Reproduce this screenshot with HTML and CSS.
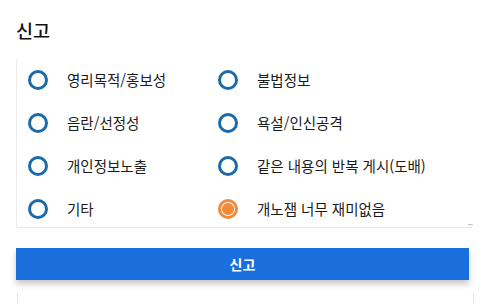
FILE: index.html
```html
<!DOCTYPE html>
<html lang="ko">
<head>
<meta charset="utf-8">
<link rel="stylesheet" href="styles.css">
</head>
<body>
<div class="dialog">
  <h1 class="title">신고</h1>
  <div class="options">
    <label class="opt"><span class="radio"></span><span class="label">영리목적/홍보성</span></label>
    <label class="opt"><span class="radio"></span><span class="label">불법정보</span></label>
    <label class="opt"><span class="radio"></span><span class="label">음란/선정성</span></label>
    <label class="opt"><span class="radio"></span><span class="label">욕설/인신공격</span></label>
    <label class="opt"><span class="radio"></span><span class="label">개인정보노출</span></label>
    <label class="opt"><span class="radio"></span><span class="label">같은 내용의 반복 게시(도배)</span></label>
    <label class="opt"><span class="radio"></span><span class="label">기타</span></label>
    <label class="opt"><span class="radio checked"></span><span class="label">개노잼 너무 재미없음</span></label>
    <span class="grip">···</span>
  </div>
  <button class="submit">신고</button>
  <div class="next"></div>
</div>
</body>
</html>
```
FILE: styles.css
```css
html, body {
  margin: 0;
  padding: 0;
  background: #ffffff;
}
body {
  width: 482px;
  height: 304px;
  overflow: hidden;
  font-family: "Noto Sans CJK KR", "Noto Sans", sans-serif;
  color: #111;
}
.dialog {
  padding: 0 10px 0 16px;
}
.title {
  margin: 0;
  padding-top: 17px;
  height: 59px;
  box-sizing: border-box;
  font-size: 18.5px;
  font-weight: 500;
  line-height: 26px;
}
.options {
  position: relative;
  display: grid;
  grid-template-columns: 190px 1fr;
  grid-auto-rows: 20px;
  row-gap: 23px;
  padding: 11px 0 8px 11px;
  border-left: 1px solid #ececec;
  border-bottom: 1px solid #e6e6e6;
}
.opt {
  display: flex;
  align-items: center;
  gap: 19px;
  font-size: 14.5px;
  line-height: 20px;
  color: #1a1a1a;
}
.radio {
  width: 20px;
  height: 20px;
  box-sizing: border-box;
  border: 3px solid #1c6aa8;
  border-radius: 50%;
  flex: none;
}
.radio.checked {
  border-color: #f08b3c;
  background: radial-gradient(circle, #f08b3c 0 5.5px, #ffffff 6.5px);
}
.grip {
  position: absolute;
  right: 0;
  bottom: -2px;
  font-size: 9px;
  line-height: 9px;
  color: #aaa;
  letter-spacing: -1px;
}
.submit {
  display: block;
  width: 453px;
  height: 32px;
  margin-top: 20px;
  border: none;
  background: #1b6fdc;
  color: #fff;
  font-family: "Noto Sans CJK KR", "Noto Sans", sans-serif;
  font-size: 14px;
  font-weight: 700;
  box-shadow: 0 4px 6px rgba(0, 0, 0, 0.22);
  padding: 0;
}
.next {
  margin-top: 13px;
  margin-left: 1px;
  width: 455px;
  height: 20px;
  border-left: 1px solid #e4e4e4;
  border-right: 1px solid #e4e4e4;
}
```
